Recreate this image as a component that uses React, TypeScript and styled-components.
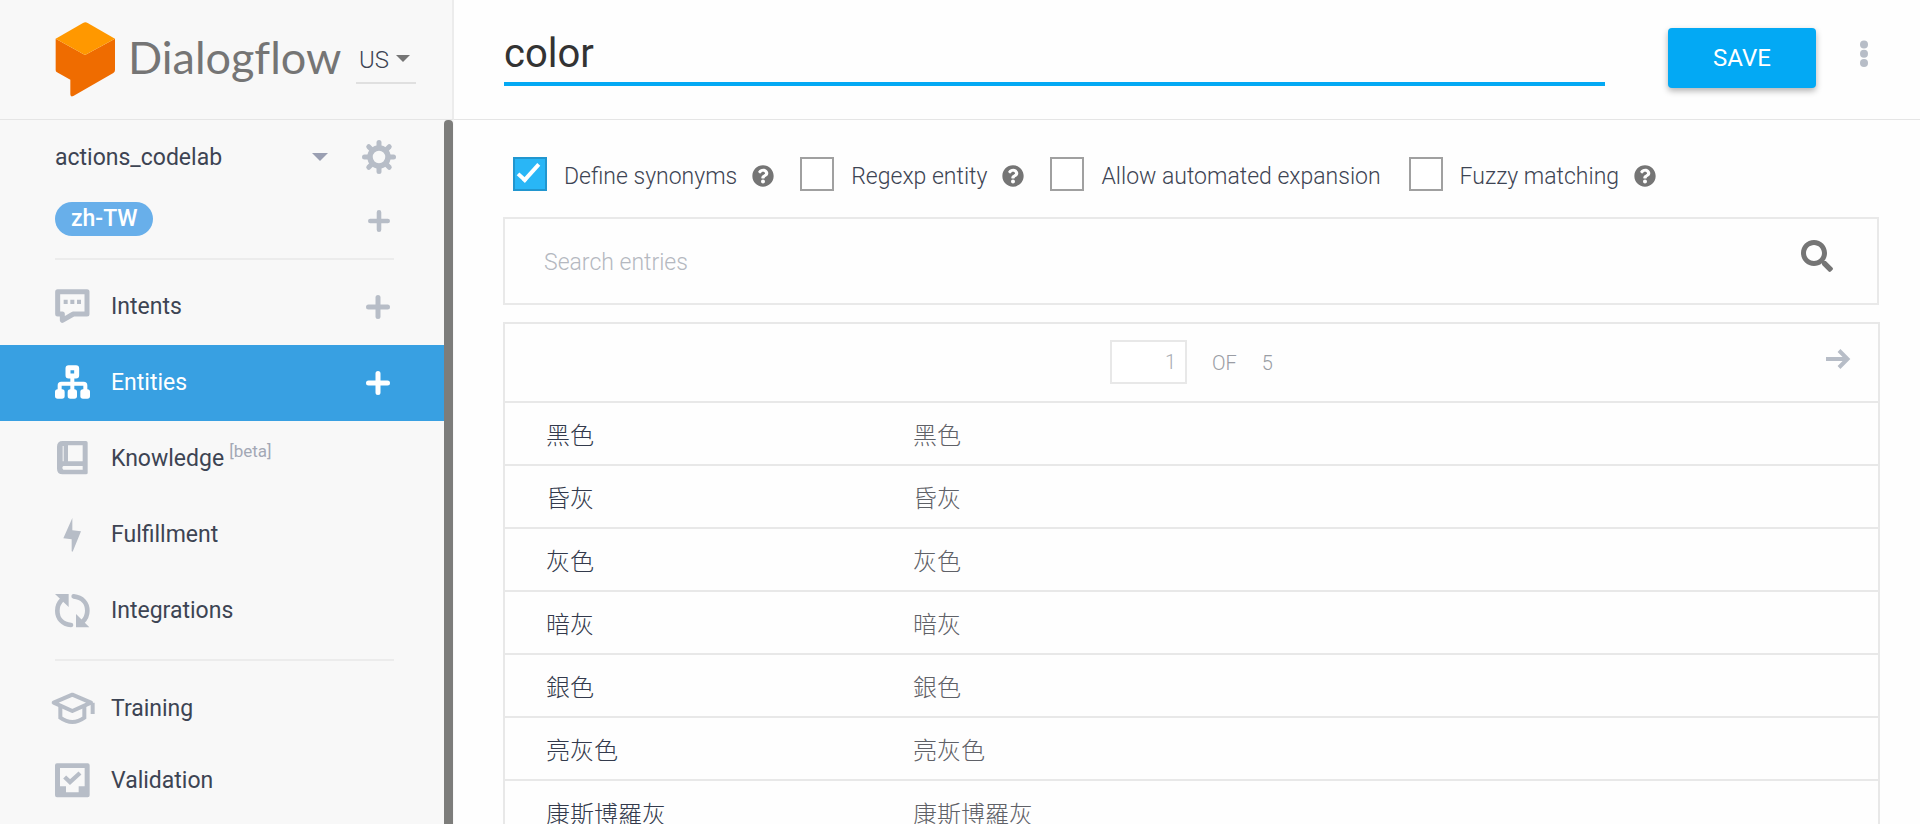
import React, { useState } from 'react';
import styled, { createGlobalStyle } from 'styled-components';
import { FaQuestionCircle, FaSearch } from 'react-icons/fa';

const SANS = 'Roboto, "Noto Sans CJK TC", sans-serif';
const LINE = '#e5e5e5';
const MUTED = '#b7bdc7';
const INK = '#3d4453';
const BLUE = '#03a9f4';

const GlobalStyle = createGlobalStyle`
  *, *::before, *::after { box-sizing: border-box; }
  body { margin: 0; background: #fefefe; color: ${INK}; font-family: ${SANS}; font-size: 23px; line-height: 32px; overflow: hidden; }
  button, input, select { font: inherit; color: inherit; }
`;

const Page = styled.div`
  display: grid;
  grid-template-columns: 454px minmax(0, 1fr);
  height: 100vh;
`;

/* ---------- sidebar ---------- */

const Sidebar = styled.aside`
  display: flex;
  flex-direction: column;
  min-height: 0;
  background: #f8f8f8;
`;

const Brand = styled.div`
  flex: none;
  display: flex;
  align-items: center;
  height: 120px;
  padding: 0 36px 0 55px;
  border-right: 2px solid #ececec;
  border-bottom: 1px solid ${LINE};
`;

const BrandName = styled.span`
  flex: 1;
  margin-left: 12px;
  padding-bottom: 6px;
  font-family: Lato, sans-serif;
  font-size: 45px;
  line-height: 52px;
  font-variant-ligatures: none;
  color: #757575;
`;

const Region = styled.label`
  flex: none;
  display: flex;
  align-items: center;
  width: 60px;
  height: 48px;
  padding-left: 3px;
  border-bottom: 2px solid #e0e0e0;
`;

const BareSelect = styled.select`
  flex: 1;
  min-width: 0;
  padding: 2px 0 0;
  border: 0;
  outline: 0;
  appearance: none;
  background: none;
`;

const Caret = styled.span<{ $tone: string; $half: number }>`
  flex: none;
  border: ${(p) => p.$half}px solid transparent;
  border-top-color: ${(p) => p.$tone};
  border-bottom: 0;
`;

const RegionSelect = styled(BareSelect)`
  flex: 0 0 37px;
  font-size: 24px;
  font-weight: 300;
`;

const SideBody = styled.div`
  flex: 1;
  min-height: 0;
  display: grid;
  grid-template-columns: minmax(0, 1fr) 9px;
  padding-right: 1px;
`;

const ScrollThumb = styled.div`
  border-radius: 4px 4px 0 0;
  background: #7d7d7b;
`;

const SideContent = styled.div`
  min-width: 0;
  overflow: hidden;
`;

const AgentRow = styled.div`
  display: flex;
  align-items: center;
  height: 74px;
  padding: 0 48px 0 55px;
`;

const AgentPicker = styled.label`
  flex: 1;
  display: flex;
  align-items: center;
  margin-right: 34px;
`;

const LocaleRow = styled.div`
  display: flex;
  align-items: flex-start;
  justify-content: space-between;
  height: 64px;
  padding: 8px 54px 0 55px;

  > button:last-child { padding-top: 8px; }
`;

const Pill = styled.button`
  height: 34px;
  padding: 0 15px 0 16px;
  border: 0;
  border-radius: 17px;
  background: #68afea;
  color: #fff;
  font-weight: 500;
  line-height: 32px;
`;

const IconButton = styled.button`
  display: flex;
  padding: 0;
  border: 0;
  background: none;
  color: ${MUTED};
`;

const Rule = styled.hr`
  height: 2px;
  margin: 0 50px 0 55px;
  border: 0;
  background: #ececec;
`;

const NavList = styled.ul<{ $top: number; $bottom: number }>`
  margin: 0;
  padding: ${(p) => p.$top}px 0 ${(p) => p.$bottom}px;
  list-style: none;
`;

const NavItem = styled.li<{ $active?: boolean; $tall?: boolean }>`
  display: flex;
  align-items: center;
  height: ${(p) => (p.$tall ? 76 : 72)}px;
  padding: 0 54px 0 49px;
  background: ${(p) => (p.$active ? '#38a0e2' : 'transparent')};
  color: ${(p) => (p.$active ? '#fff' : INK)};

  ${IconButton} { color: ${(p) => (p.$active ? '#fff' : MUTED)}; }
`;

const NavLink = styled.a<{ $active?: boolean }>`
  flex: 1;
  display: flex;
  align-items: center;
  color: inherit;
  text-decoration: none;

  svg { flex: none; margin-right: 16px; color: ${(p) => (p.$active ? '#fff' : MUTED)}; }
`;

const Beta = styled.span`
  align-self: flex-start;
  margin-left: 5px;
  font-size: 17px;
  line-height: 20px;
  color: #a3a8b5;
`;

/* ---------- main ---------- */

const Main = styled.main`
  display: flex;
  flex-direction: column;
  min-width: 0;
  min-height: 0;
`;

const TopBar = styled.header`
  flex: none;
  display: flex;
  align-items: flex-start;
  height: 120px;
  padding: 28px 52px 0 50px;
  border-bottom: 1px solid ${LINE};
`;

const TitleInput = styled.input`
  flex: 1;
  min-width: 0;
  height: 58px;
  padding: 0 0 4px;
  border: 0;
  border-bottom: 4px solid ${BLUE};
  outline: 0;
  background: none;
  color: #333;
  font-size: 40px;
  line-height: 46px;
`;

const SaveButton = styled.button`
  width: 148px;
  height: 60px;
  margin: 0 44px 0 63px;
  border: 0;
  border-radius: 4px;
  background: ${BLUE};
  box-shadow: 0 3px 6px rgba(0, 0, 0, 0.3);
  color: #fff;
  font-size: 24px;
`;

const MenuButton = styled(IconButton)`
  padding-top: 12px;
`;

const Content = styled.div`
  flex: 1;
  min-height: 0;
  overflow: hidden;
  padding: 37px 40px 0 49px;
`;

const Options = styled.div`
  display: flex;
  align-items: center;
  gap: 26px;
  height: 34px;
  margin-bottom: 26px;
  padding-left: 10px;
`;

const Option = styled.div`
  display: flex;
  align-items: center;
  white-space: nowrap;

  label { padding: 6px 2px 0 17px; font-weight: 300; }
`;

const Tick = styled.input`
  flex: none;
  display: grid;
  place-items: center;
  width: 34px;
  height: 34px;
  margin: 0;
  appearance: none;
  border: 2px solid #a0a0a0;
  background: #fff;

  &:checked { border-color: #2196cf; background: #29b6f6; }
  &:checked::before {
    content: '';
    width: 11px;
    height: 23px;
    margin: 0 3px 8px 0;
    border: solid #fff;
    border-width: 0 4px 4px 0;
    transform: rotate(42deg);
  }
`;

const HelpButton = styled(IconButton)`
  margin: 4px 0 0 13px;
  color: #757575;
`;

const SearchBar = styled.form`
  display: flex;
  align-items: center;
  height: 88px;
  margin: 0 1px 17px 0;
  padding: 0 44px 0 39px;
  border: 2px solid #e9e9e9;

  input {
    flex: 1;
    min-width: 0;
    padding: 3px 0 0;
    border: 0;
    outline: 0;
    background: none;
    font-weight: 300;
  }
  input::placeholder { color: #b4b8c0; opacity: 1; }
`;

const SearchButton = styled(IconButton)`
  padding-bottom: 10px;
  color: #757575;
`;

const Entries = styled.section`
  border: 2px solid #e8e8e8;
`;

const Pager = styled.div`
  display: grid;
  grid-template-columns: 1fr auto 1fr;
  align-items: center;
  height: 77px;
  font-size: 20px;
  font-weight: 300;
  color: #9a9da4;
`;

const PagerMiddle = styled.div`
  display: flex;
  align-items: center;
  gap: 25px;
  padding-bottom: 2px;

  > span { padding-top: 2px; }
`;

const PageInput = styled.input`
  width: 77px;
  height: 44px;
  padding: 0 9px 0 0;
  border: 2px solid #e8e8e8;
  outline: 0;
  background: #fff;
  color: #a9acb2;
  font-weight: 300;
  text-align: right;
`;

const NextButton = styled(IconButton)`
  justify-self: end;
  margin-right: 27px;
  padding-bottom: 8px;
`;

const EntryTable = styled.table`
  width: 100%;
  table-layout: fixed;
  border-collapse: collapse;
  font-size: 24px;

  th, td {
    height: 63px;
    padding: 5px 0 0;
    border-top: 2px solid #e8e8e8;
    text-align: left;
    font-weight: 300;
    white-space: nowrap;
  }
  th { width: 408px; padding-left: 41px; color: #333a4c; }
  td { color: #5f6167; }
`;

/* ---------- drawings ---------- */

const Logo = () => (
  <svg width="61" height="76" viewBox="165 67 183 228" aria-hidden="true">
    <path d="M167 117 L255 166 L345 117 V211 Q345 217 340 220 L220 289 Q211 293 211 284 V240 L171 218 Q167 216 167 211Z" fill="#ef6c00" />
    <path d="M167 117 L249 70 Q256 66 263 70 L345 117 L255 166Z" fill="#ff9800" />
  </svg>
);

const Glyph = ({ top, children }: { top: number; children: React.ReactNode }) => (
  <svg width="46" height="36" viewBox={`147 ${top} 138 108`} fill="none" stroke="currentColor" aria-hidden="true">
    {children}
  </svg>
);

const IntentsIcon = () => (
  <Glyph top={86}>
    <path d="M173 94.500H261V161H220L187 180V161H173Z" strokeWidth="15" strokeLinejoin="round" />
    <path d="M191 118h12v13h-12zM211 118h12v13h-12zM231 118h12v13h-12z" fill="currentColor" stroke="none" />
  </Glyph>
);

const EntitiesIcon = () => (
  <Glyph top={315}>
    <rect x="204" y="323" width="26" height="25" rx="2" strokeWidth="15" />
    <path d="M217 352V392M179 392V376Q179 371 184 371H251Q256 371 256 376V392" strokeWidth="12" />
    <rect x="165" y="388" width="29" height="28" rx="8" fill="currentColor" stroke="none" />
    <rect x="203" y="388" width="28" height="28" rx="8" fill="currentColor" stroke="none" />
    <rect x="241" y="388" width="29" height="28" rx="8" fill="currentColor" stroke="none" />
  </Glyph>
);

const KnowledgeIcon = () => (
  <Glyph top={545}>
    <path
      d="M188 545H258Q263 545 263 550V641Q263 645 258 645H188Q171 645 171 628V562Q171 545 188 545ZM204 558V606H248V558ZM190 620Q184 625 190 631H248V620ZM188 560V606H191V560Z"
      fill="currentColor" fillRule="evenodd" stroke="none"
    />
  </Glyph>
);

const FulfillmentIcon = () => (
  <Glyph top={770}>
    <path d="M217 773V810L243 813L218 874L215 873V837L190 834Z" fill="currentColor" stroke="none" />
  </Glyph>
);

const IntegrationsIcon = () => (
  <Glyph top={160}>
    <path d="M221 170C247 173 262 190 262 213C262 226 257 237 248 246" strokeWidth="14" strokeLinecap="round" />
    <path d="M213 256C187 253 172 236 172 213C172 200 177 189 186 180" strokeWidth="14" strokeLinecap="round" />
    <path d="M165 163H206V202ZM268 263H228V223Z" fill="currentColor" stroke="none" />
  </Glyph>
);

const TrainingIcon = () => (
  <Glyph top={454}>
    <path d="M161 489L217 465L273 489L217 514Z" strokeWidth="12" strokeLinejoin="round" />
    <path d="M278 489V523M181 499V534Q217 560 253 534V499" strokeWidth="12" />
  </Glyph>
);

const ValidationIcon = () => (
  <Glyph top={670}>
    <path
      d="M171 671H263Q269 671 269 677V767Q269 773 263 773H171Q165 773 165 767V677Q165 671 171 671ZM180 685V740H198V758H236V740H254V685Z"
      fill="currentColor" fillRule="evenodd" stroke="none"
    />
    <path d="M194 712L210 727L240 700" strokeWidth="13" />
  </Glyph>
);

const Plus = ({ size }: { size: number }) => (
  <svg width={size} height={size} viewBox="0 0 24 24" stroke="currentColor" strokeWidth="5" strokeLinecap="round" aria-hidden="true">
    <path d="M12 2.500V21.500M2.500 12H21.500" />
  </svg>
);

const Gear = () => (
  <svg width="34" height="34" viewBox="-17 -17 34 34" fill="none" stroke="currentColor" aria-hidden="true">
    <circle r="9" strokeWidth="5.500" />
    {[0, 45, 90, 135, 180, 225, 270, 315].map((a) => (
      <path key={a} d="M0 -10V-14.500" strokeWidth="5" strokeLinecap="round" transform={`rotate(${a})`} />
    ))}
  </svg>
);

const Dots = () => (
  <svg width="8" height="28" viewBox="0 0 8 28" fill="currentColor" aria-hidden="true">
    <circle cx="4" cy="4.500" r="4" />
    <circle cx="4" cy="13.800" r="4" />
    <circle cx="4" cy="23" r="4" />
  </svg>
);

const Arrow = () => (
  <svg width="26" height="22" viewBox="0 0 26 22" fill="none" stroke="currentColor" strokeWidth="4" aria-hidden="true">
    <path d="M1 11H22M14 2.500L22.500 11L14 19.500" />
  </svg>
);

/* ---------- data ---------- */

const mainNav = [
  { label: 'Intents', icon: <IntentsIcon />, add: true },
  { label: 'Entities', icon: <EntitiesIcon />, add: true, active: true },
  { label: 'Knowledge', icon: <KnowledgeIcon />, beta: true },
  { label: 'Fulfillment', icon: <FulfillmentIcon /> },
  { label: 'Integrations', icon: <IntegrationsIcon /> },
];

const toolNav = [
  { label: 'Training', icon: <TrainingIcon /> },
  { label: 'Validation', icon: <ValidationIcon /> },
];

const options = [
  { id: 'synonyms', label: 'Define synonyms', on: true, help: true },
  { id: 'regexp', label: 'Regexp entity', on: false, help: true },
  { id: 'expansion', label: 'Allow automated expansion', on: false, help: false },
  { id: 'fuzzy', label: 'Fuzzy matching', on: false, help: true },
];

const entries = ['黑色', '昏灰', '灰色', '暗灰', '銀色', '亮灰色', '康斯博羅灰'];

export default function App() {
  const [name, setName] = useState('color');
  const [page, setPage] = useState('1');

  return (
    <Page>
      <GlobalStyle />
      <Sidebar>
        <Brand>
          <Logo />
          <BrandName>Dialogflow</BrandName>
          <Region>
            <RegionSelect aria-label="Region">
              <option>US</option>
            </RegionSelect>
            <Caret $tone="#757575" $half={7} />
          </Region>
        </Brand>
        <SideBody>
          <SideContent>
            <AgentRow>
              <AgentPicker>
                <BareSelect aria-label="Agent">
                  <option>actions_codelab</option>
                </BareSelect>
                <Caret $tone="#9a9fb2" $half={8} />
              </AgentPicker>
              <IconButton aria-label="Agent settings"><Gear /></IconButton>
            </AgentRow>
            <LocaleRow>
              <Pill>zh-TW</Pill>
              <IconButton aria-label="Add language"><Plus size={22} /></IconButton>
            </LocaleRow>
            <Rule />
            <NavList $top={9} $bottom={10}>
              {mainNav.map((n) => (
                <NavItem key={n.label} $active={n.active} $tall>
                  <NavLink href="#" $active={n.active}>
                    {n.icon}
                    {n.label}
                    {n.beta && <Beta>[beta]</Beta>}
                  </NavLink>
                  {n.add && <IconButton aria-label={`Create ${n.label}`}><Plus size={24} /></IconButton>}
                </NavItem>
              ))}
            </NavList>
            <Rule />
            <NavList $top={12} $bottom={0}>
              {toolNav.map((n) => (
                <NavItem key={n.label}>
                  <NavLink href="#">{n.icon}{n.label}</NavLink>
                </NavItem>
              ))}
            </NavList>
          </SideContent>
          <ScrollThumb />
        </SideBody>
      </Sidebar>

      <Main>
        <TopBar>
          <TitleInput aria-label="Entity name" value={name} onChange={(e) => setName(e.target.value)} />
          <SaveButton>SAVE</SaveButton>
          <MenuButton aria-label="More actions"><Dots /></MenuButton>
        </TopBar>
        <Content>
          <Options>
            {options.map((o) => (
              <Option key={o.id}>
                <Tick type="checkbox" id={o.id} defaultChecked={o.on} />
                <label htmlFor={o.id}>{o.label}</label>
                {o.help && (
                  <HelpButton aria-label={`About ${o.label}`}><FaQuestionCircle size={22} /></HelpButton>
                )}
              </Option>
            ))}
          </Options>
          <SearchBar onSubmit={(e) => e.preventDefault()}>
            <input type="text" aria-label="Search entries" placeholder="Search entries" />
            <SearchButton aria-label="Search"><FaSearch size={32} /></SearchButton>
          </SearchBar>
          <Entries>
            <Pager>
              <span />
              <PagerMiddle>
                <PageInput aria-label="Page" value={page} onChange={(e) => setPage(e.target.value)} />
                <span>OF</span>
                <span>5</span>
              </PagerMiddle>
              <NextButton aria-label="Next page"><Arrow /></NextButton>
            </Pager>
            <EntryTable>
              <tbody>
                {entries.map((e) => (
                  <tr key={e}>
                    <th scope="row">{e}</th>
                    <td>{e}</td>
                  </tr>
                ))}
              </tbody>
            </EntryTable>
          </Entries>
        </Content>
      </Main>
    </Page>
  );
}
